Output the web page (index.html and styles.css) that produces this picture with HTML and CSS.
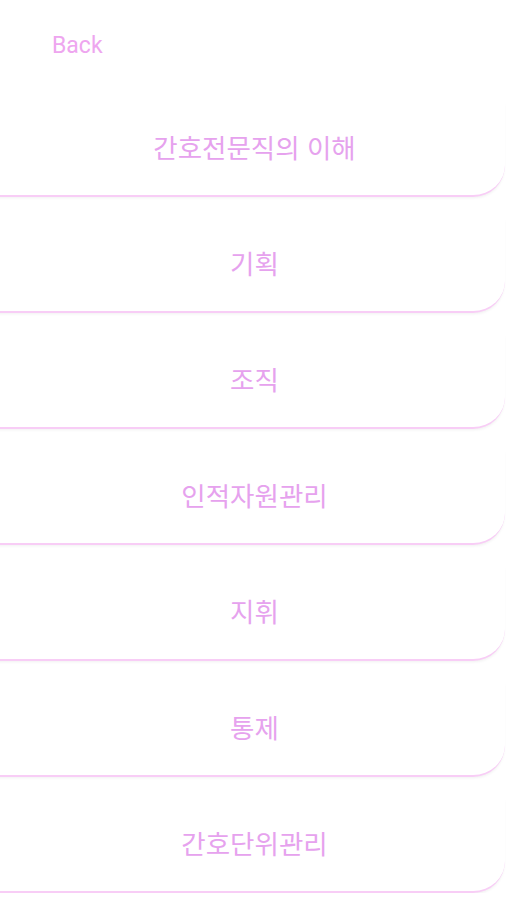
FILE: index.html
```html
<!DOCTYPE html>
<html lang="ko">
<head>
    <meta charset="UTF-8">
    <meta name="viewport" content="width=device-width, initial-scale=1.0">
    <title>간호관리학</title>
    <link rel="stylesheet" href="styles.css">
</head>
<body>
    <a class="back" href="#">Back</a>
    <ul class="menu">
        <li class="item">간호전문직의 이해</li>
        <li class="item">기획</li>
        <li class="item">조직</li>
        <li class="item">인적자원관리</li>
        <li class="item">지휘</li>
        <li class="item">통제</li>
        <li class="item">간호단위관리</li>
    </ul>
</body>
</html>
```
FILE: styles.css
```css
body {
    margin: 0;
    background: #fff;
    font-family: "Noto Sans CJK KR", "Noto Sans", sans-serif;
    color: #e6a2ee;
    overflow: hidden;
}
.back {
    display: block;
    padding: 32px 0 0 52px;
    height: 67px;
    box-sizing: border-box;
    font-family: Roboto, "Noto Sans", sans-serif;
    font-size: 23px;
    color: #eea6ef;
    text-decoration: none;
}
.menu {
    list-style: none;
    margin: 0;
    padding: 32px 0 0;
    display: flex;
    flex-direction: column;
    gap: 18px;
}
.item {
    height: 98px;
    margin-left: -10px;
    margin-right: 2px;
    display: flex;
    align-items: center;
    justify-content: center;
    padding-left: 14px;
    padding-bottom: 2px;
    box-sizing: border-box;
    font-size: 26.5px;
    font-weight: 400;
    background: #fff;
    border-bottom: 2px solid #f8cdf6;
    border-bottom-right-radius: 32px;
    box-shadow: 1px 3px 3px -2px rgba(0, 0, 0, 0.06);
}
```
